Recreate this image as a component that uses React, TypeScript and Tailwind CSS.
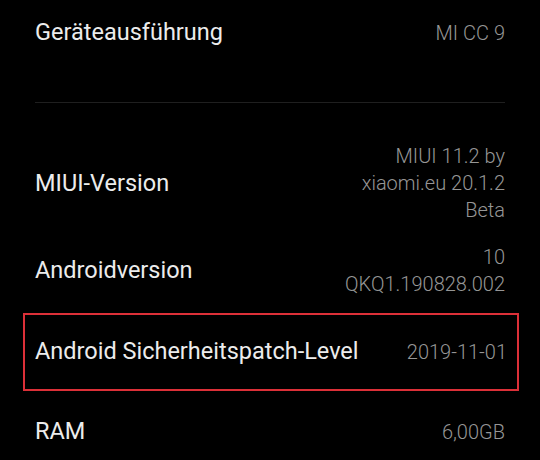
const font = { fontFamily: 'Roboto, "Noto Sans", sans-serif' };

function Row({ label, value }: { label: string; value: string[] }) {
  return (
    <div className="flex items-center justify-between">
      <span className="text-[23.5px] text-[#ececec]">{label}</span>
      <div className="text-right text-[20px] font-light leading-[27px] text-[#969696]">
        {value.map((v) => (
          <div key={v}>{v}</div>
        ))}
      </div>
    </div>
  );
}

export default function App() {
  return (
    <div className="w-[540px] h-[460px] overflow-hidden bg-black" style={font}>
      <div className="px-[35px]">
        <div className="h-[66px] flex items-center justify-between">
          <span className="text-[23.5px] text-[#ececec]">Geräteausführung</span>
          <span className="text-[20px] font-light text-[#969696]">MI CC 9</span>
        </div>
        <div className="mt-[36px] h-px bg-[#1f1f1f]" />
        <div className="mt-[40px]">
          <Row label="MIUI-Version" value={['MIUI 11.2 by', 'xiaomi.eu 20.1.2', 'Beta']} />
        </div>
        <div className="mt-[20px]">
          <Row label="Androidversion" value={['10', 'QKQ1.190828.002']} />
        </div>
      </div>
      <div className="ml-[23px] mr-[21px] mt-[15px] h-[78px] border-2 border-[#dc3038] pl-[10px] pr-[10px] flex items-center justify-between">
        <span className="text-[23.5px] text-[#ececec]">Android Sicherheitspatch-Level</span>
        <span className="text-[20px] font-light text-[#969696]">2019-11-01</span>
      </div>
      <div className="px-[35px] mt-[21px] h-[40px] flex items-center justify-between">
        <span className="text-[23.5px] text-[#ececec]">RAM</span>
        <span className="text-[20px] font-light text-[#969696]">6,00GB</span>
      </div>
    </div>
  );
}
